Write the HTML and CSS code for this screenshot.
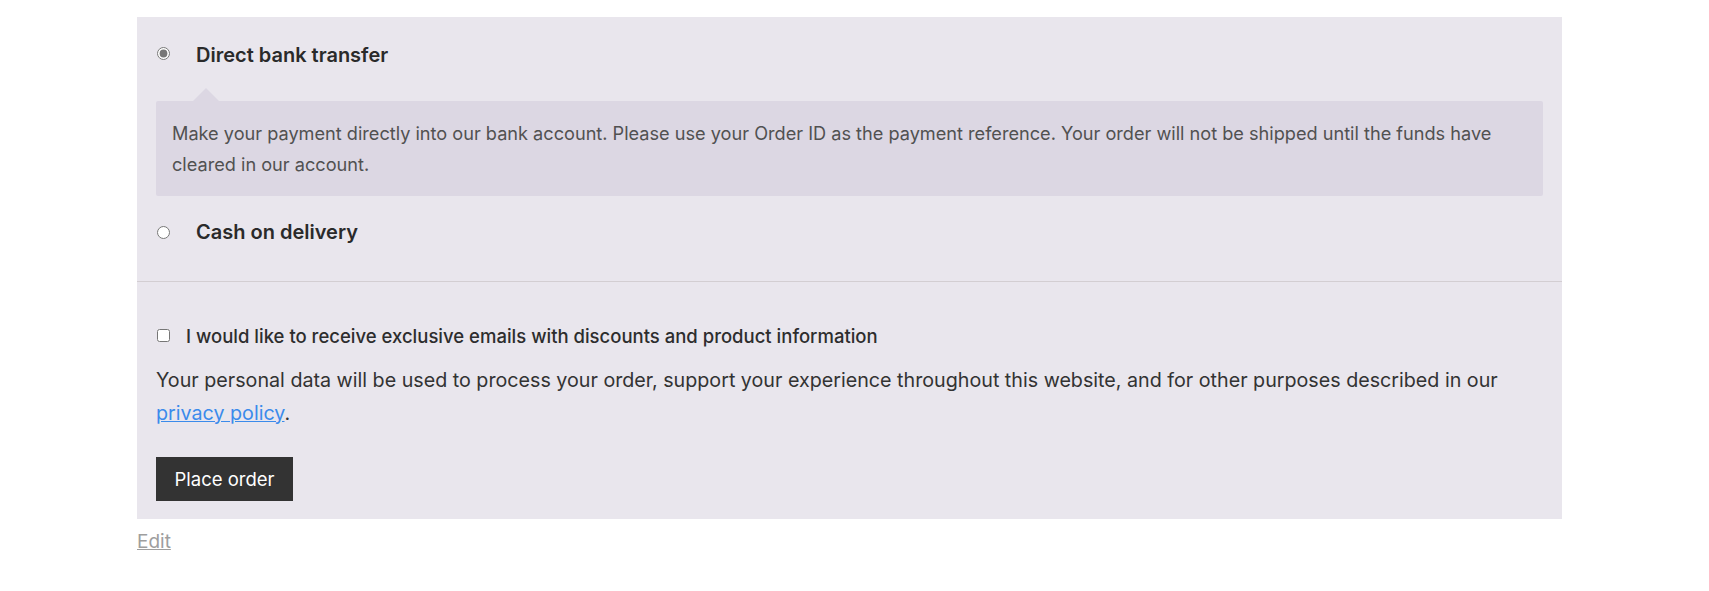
FILE: index.html
```html
<!DOCTYPE html>
<html lang="en">
<head>
<meta charset="utf-8">
<title>Checkout payment</title>
<link rel="stylesheet" href="styles.css">
</head>
<body>
<div class="checkout">
  <div class="payment">
    <ul class="methods">
      <li class="method">
        <div class="method-row">
          <input type="radio" name="pm" id="pm-bacs" class="radio radio-checked" checked>
          <label for="pm-bacs">Direct bank transfer</label>
        </div>
        <div class="payment-box">
          <p>Make your payment directly into our bank account. Please use your Order ID as the payment reference. Your order will not be shipped until the funds have cleared in our account.</p>
        </div>
      </li>
      <li class="method">
        <div class="method-row">
          <input type="radio" name="pm" id="pm-cod" class="radio">
          <label for="pm-cod">Cash on delivery</label>
        </div>
      </li>
    </ul>
    <div class="place-order">
      <label class="opt-in"><input type="checkbox" class="check"><span>I would like to receive exclusive emails with discounts and product information</span></label>
      <p class="privacy">Your personal data will be used to process your order, support your experience throughout this website, and for other purposes described in our <a href="#">privacy policy</a>.</p>
      <button type="button" class="btn">Place order</button>
    </div>
  </div>
  <a href="#" class="edit">Edit</a>
</div>
</body>
</html>
```

FILE: styles.css
```css
html, body {
  margin: 0;
  padding: 0;
  background: #ffffff;
}

body {
  font-family: Inter, "Noto Sans", sans-serif;
  color: #333333;
}

.checkout {
  width: 1425px;
  padding: 17px 0 0 137px;
}

.payment {
  background: #e9e6ed;
}

.methods {
  list-style: none;
  margin: 0;
  padding: 19px 19px 30px;
  border-bottom: 1px solid #d3ced2;
}

.method-row {
  display: flex;
  align-items: center;
  height: 38px;
}

.method-row label {
  margin-left: 26px;
  font-size: 20px;
  font-weight: 600;
  line-height: 38px;
  color: #2a2a2a;
}

.radio {
  width: 13px;
  height: 13px;
  margin: 0 0 0 1px;
  accent-color: #777777;
}

.radio-checked {
  margin-bottom: 3px;
}

.payment-box {
  position: relative;
  margin: 27px 0 17px;
  padding: 17px 16px;
  background: #dcd7e3;
  border-radius: 2px;
  font-size: 18.15px;
  line-height: 30.5px;
  color: #515151;
}

.payment-box::before {
  content: "";
  position: absolute;
  top: -13px;
  left: 37px;
  border: 13px solid transparent;
  border-top: 0;
  border-bottom-color: #dcd7e3;
}

.payment-box p {
  margin: 0;
}

.place-order {
  padding: 38.5px 19px 18px;
}

.opt-in {
  display: flex;
  align-items: center;
  height: 30px;
  font-size: 18.5px;
  font-weight: 500;
  color: #2d2d2d;
}

.check {
  width: 13px;
  height: 13px;
  margin: 0 16px 0 1px;
}

.privacy {
  margin: 13.4px 0 0;
  font-size: 19.7px;
  line-height: 33px;
  color: #333333;
}

.privacy a {
  color: #3b8beb;
}

.btn {
  display: block;
  margin-top: 27px;
  width: 137px;
  height: 44px;
  padding: 0;
  border: 0;
  border-radius: 0;
  background: #333333;
  color: #ffffff;
  font-family: Inter, "Noto Sans", sans-serif;
  font-size: 18.5px;
  font-weight: 400;
  line-height: 44px;
  text-align: center;
}

.edit {
  display: block;
  width: fit-content;
  margin-top: 9px;
  font-size: 19px;
  line-height: 28px;
  color: #9e9e9e;
}
```
